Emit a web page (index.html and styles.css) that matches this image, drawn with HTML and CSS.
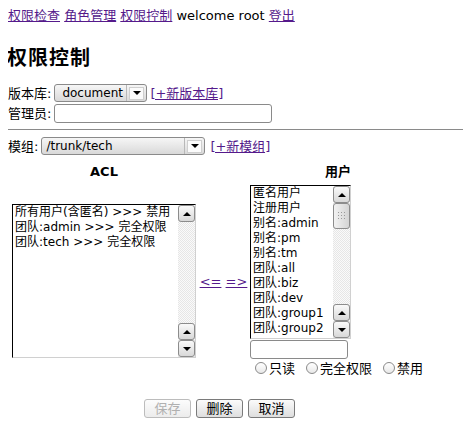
FILE: index.html
```html
<!DOCTYPE html>
<html>
<head>
<meta charset="utf-8">
<link rel="stylesheet" href="styles.css">
</head>
<body>
<div class="nav">
  <a href="#">权限检查</a> <a href="#">角色管理</a> <a href="#">权限控制</a> welcome root <a href="#">登出</a>
</div>
<h2 class="title">权限控制</h2>
<div class="row">
  <span class="label">版本库:</span>
  <span class="select sel-repo"><span class="sel-text">document</span><span class="sel-btn"><span class="arrowbox"><span class="tri-down"></span></span></span></span>
  <a href="#" class="addlink">[+新版本库]</a>
</div>
<div class="row">
  <span class="label">管理员:</span>
  <span class="input admin-input"></span>
</div>
<hr class="sep">
<div class="row">
  <span class="label">模组:</span>
  <span class="select sel-mod"><span class="sel-text">/trunk/tech</span><span class="sel-btn"><span class="arrowbox"><span class="tri-down"></span></span></span></span>
  <a href="#" class="addlink">[+新模组]</a>
</div>
<div class="panel">
  <div class="grid">
    <div class="head">ACL</div>
    <div></div>
    <div class="head">用户</div>
    <div class="cell-mid">
      <div class="listbox acl">
        <div class="items">
          <div>所有用户(含匿名) &gt;&gt;&gt; 禁用</div>
          <div>团队:admin &gt;&gt;&gt; 完全权限</div>
          <div>团队:tech &gt;&gt;&gt; 完全权限</div>
        </div>
        <div class="sbar">
          <div class="sbtn"><span class="tri-up"></span></div>
          <div class="track"></div>
          <div class="sbtn"><span class="tri-up"></span></div>
          <div class="sbtn"><span class="tri-down"></span></div>
        </div>
      </div>
    </div>
    <div class="cell-mid arrows"><span><a href="#">&lt;=</a> <a href="#">=&gt;</a></span></div>
    <div class="usercol">
      <div class="listbox users">
        <div class="items">
          <div>匿名用户</div>
          <div>注册用户</div>
          <div>别名:admin</div>
          <div>别名:pm</div>
          <div>别名:tm</div>
          <div>团队:all</div>
          <div>团队:biz</div>
          <div>团队:dev</div>
          <div>团队:group1</div>
          <div>团队:group2</div>
        </div>
        <div class="sbar">
          <div class="sbtn"><span class="tri-up"></span></div>
          <div class="thumb"><span class="grip"></span></div>
          <div class="track"></div>
          <div class="sbtn"><span class="tri-up"></span></div>
          <div class="sbtn"><span class="tri-down"></span></div>
        </div>
      </div>
      <span class="input user-input"></span>
      <div class="radios">
        <span class="radio"></span><span class="rlabel">只读</span>
        <span class="radio"></span><span class="rlabel">完全权限</span>
        <span class="radio"></span><span class="rlabel">禁用</span>
      </div>
    </div>
  </div>
  <div class="buttons">
    <span class="btn disabled">保存</span>
    <span class="btn">删除</span>
    <span class="btn">取消</span>
  </div>
</div>
</body>
</html>
```
FILE: styles.css
```css
html, body {
  background: #fff;
}
body {
  margin: 8px;
  font-family: "DejaVu Sans", "Noto Sans CJK SC", sans-serif;
  font-size: 13px;
  color: #000;
  line-height: 15px;
}
a {
  color: #551a8b;
}
.nav {
  height: 15px;
}
.title {
  font-size: 20px;
  font-weight: bold;
  line-height: 24px;
  margin: 23px 0 14px -1px;
  letter-spacing: 1px;
}
.row {
  display: flex;
  align-items: center;
  height: 18px;
  margin-bottom: 2px;
  white-space: nowrap;
}
.label {
  margin-right: 3px;
}
.select {
  display: inline-flex;
  align-items: stretch;
  height: 16px;
  border: 1px solid #8a8a8a;
  border-radius: 3px;
  background: linear-gradient(#f6f6f6, #d9d9d9);
  box-sizing: content-box;
}
.sel-repo {
  width: 91px;
  margin-right: 3px;
}
.sel-mod {
  width: 162px;
  margin-right: 5px;
}
.sel-text {
  flex: 1;
  padding-left: 7px;
  line-height: 16px;
  font-size: 12px;
}
.sel-mod .sel-text {
  padding-left: 4px;
}
.sel-btn {
  width: 19px;
  border-left: 1px solid #b8b8b8;
  display: flex;
  align-items: center;
  justify-content: center;
}
.arrowbox {
  width: 13px;
  height: 11px;
  border: 1px solid #cfcfcf;
  background: #fbfbfb;
  display: flex;
  align-items: center;
  justify-content: center;
}
.tri-down {
  width: 0;
  height: 0;
  border-left: 4px solid transparent;
  border-right: 4px solid transparent;
  border-top: 4px solid #000;
}
.tri-up {
  width: 0;
  height: 0;
  border-left: 4px solid transparent;
  border-right: 4px solid transparent;
  border-bottom: 4px solid #000;
}
.input {
  display: inline-block;
  box-sizing: border-box;
  border: 1px solid #8a8a8a;
  border-radius: 3px;
  background: #fff;
  height: 19px;
}
.admin-input {
  width: 218px;
}
.sep {
  border: 0;
  border-top: 1px solid #8a8a8a;
  height: 0;
  margin: 7px 0 7px 0;
}
.panel {
  display: inline-flex;
  flex-direction: column;
  margin-left: 4px;
  margin-top: 7px;
}
.grid {
  display: grid;
  grid-template-columns: 184px 54px 176px;
  grid-template-rows: 15px auto;
  row-gap: 6px;
}
.head {
  font-weight: bold;
  text-align: center;
}
.cell-mid {
  display: flex;
  align-items: center;
}
.arrows {
  justify-content: center;
  padding-left: 1px;
  white-space: nowrap;
}
.listbox {
  display: flex;
  background: #fff;
  border: 1px solid #000;
  border-right-color: #d0d0d0;
  border-bottom-color: #d0d0d0;
  box-sizing: border-box;
}
.acl {
  width: 184px;
  height: 154px;
}
.users {
  width: 101px;
  height: 154px;
}
.items {
  flex: 1;
  padding: 0 0 0 2px;
  overflow: hidden;
  white-space: nowrap;
  font-size: 12px;
  line-height: 15px;
}
.sbar {
  width: 17px;
  display: flex;
  flex-direction: column;
  background: repeating-conic-gradient(#e6e6e6 0 25%, #fafafa 0 50%) 0 0 / 2px 2px;
}
.sbtn {
  height: 15px;
  border: 1px solid #8c8c8c;
  border-radius: 3px;
  background: linear-gradient(#fafafa, #d8d8d8);
  display: flex;
  align-items: center;
  justify-content: center;
}
.thumb {
  height: 24px;
  border: 1px solid #8c8c8c;
  border-radius: 3px;
  background: linear-gradient(90deg, #f2f2f2, #d4d4d4);
  display: flex;
  align-items: center;
  justify-content: center;
}
.grip {
  width: 9px;
  height: 10px;
  background: radial-gradient(circle, #9a9a9a 0.7px, transparent 0.8px) 0 0 / 3px 3px;
}
.track {
  flex: 1;
}
.usercol {
  display: flex;
  flex-direction: column;
}
.user-input {
  width: 98px;
  height: 19px;
  margin-top: 1px;
}
.radios {
  display: flex;
  align-items: center;
  height: 18px;
  margin-top: 0;
  padding-left: 5px;
  white-space: nowrap;
}
.radio {
  flex: none;
  width: 10px;
  height: 10px;
  border: 1px solid #8a8a8a;
  border-radius: 50%;
  background: linear-gradient(#fff, #e8e8e8);
  margin-right: 2px;
}
.rlabel {
  flex: none;
  margin-right: 11px;
}
.buttons {
  display: flex;
  justify-content: center;
  gap: 5px;
  margin-top: 22px;
  padding-left: 1px;
}
.btn {
  display: inline-block;
  box-sizing: border-box;
  width: 47px;
  height: 19px;
  line-height: 17px;
  text-align: center;
  border: 1px solid #7a7a7a;
  border-radius: 3px;
  background: linear-gradient(#fbfbfb, #dedede);
}
.btn.disabled {
  color: #b0b0b0;
  border-color: #bcbcbc;
  background: linear-gradient(#fcfcfc, #ececec);
}
```
